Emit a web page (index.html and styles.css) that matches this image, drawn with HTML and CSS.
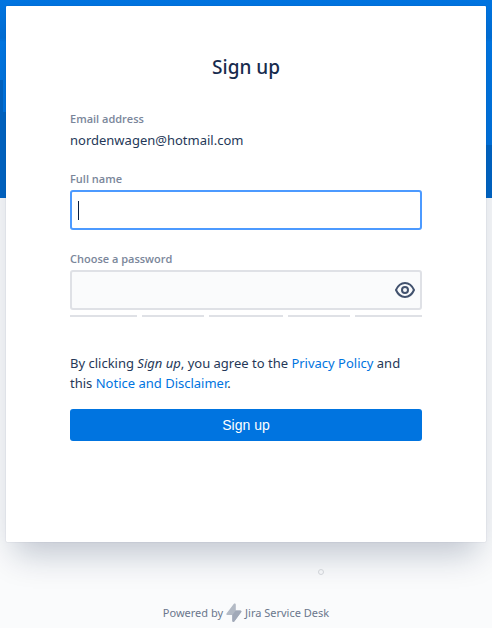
FILE: index.html
```html
<!DOCTYPE html>
<html lang="en">
<head>
<meta charset="utf-8">
<meta name="viewport" content="width=device-width, initial-scale=1">
<title>Sign up</title>
<link rel="stylesheet" href="styles.css">
</head>
<body>
<main class="card">
  <h1 class="title">Sign up</h1>
  <form class="form">
    <div class="field">
      <span class="label">Email address</span>
      <span class="value">nordenwagen@hotmail.com</span>
    </div>
    <div class="field">
      <label class="label" for="name">Full name</label>
      <div class="control control-active">
        <input class="input" id="name" type="text" autofocus>
      </div>
    </div>
    <div class="field">
      <label class="label" for="password">Choose a password</label>
      <div class="control">
        <input class="input" id="password" type="password">
        <button class="reveal" type="button" aria-label="Show password">
          <svg width="22" height="18" viewBox="0 0 22 18" fill="none" stroke="#42526e" stroke-width="2">
            <path d="M2 9C4 4.500 7 2 11 2s7 2.500 9 7c-2 4.500-5 7-9 7s-7-2.500-9-7z" stroke-linejoin="round"/>
            <circle cx="11" cy="9" r="3"/>
          </svg>
        </button>
      </div>
      <div class="strength"><i></i><i></i><i></i><i></i><i></i></div>
    </div>
    <p class="terms">By clicking <em>Sign up</em>, you agree to the <a href="#privacy">Privacy Policy</a> and this <a href="#notice">Notice and Disclaimer</a>.</p>
    <button class="submit" type="submit">Sign up</button>
  </form>
</main>
<footer class="footer">
  <span>Powered by</span>
  <svg width="16" height="20" viewBox="0 0 16 20">
    <path d="M7.700 1C8.500.2 9.800.6 9.800 1.800V7.500h4.400c1.200 0 1.600 1 .9 1.800L8.300 18.500c-.7.9-2 .5-2-.7V12H1.500C.4 12 0 11 .7 10.200z" fill="#b3bac5"/>
    <path d="M6.300 12l3.500-4.500h4.400c1.200 0 1.600 1 .9 1.800L8.300 18.500c-.7.9-2 .5-2-.7z" fill="#a1a9b8"/>
  </svg>
  <span>Jira Service Desk</span>
</footer>
<span class="dot"></span>
</body>
</html>
```
FILE: styles.css
```css
* { box-sizing: border-box; }

body {
  margin: 0;
  padding: 6px 6px 5px;
  min-height: 100vh;
  display: flex;
  flex-direction: column;
  background:
    linear-gradient(#0065c4, #0065c4) left 80px / 3px 118px no-repeat,
    linear-gradient(#0065c4, #0065c4) left 112px / 6px 86px no-repeat,
    linear-gradient(#0065c4, #0065c4) right 145px / 6px 53px no-repeat,
    linear-gradient(#0074e0 0, #006fd6 38px, #0078e5 42px, #0070da 198px) top / 100% 198px no-repeat,
    #fafbfc;
  color: #253858;
  font: 13px/20px "Noto Sans", "Open Sans", sans-serif;
}

.card {
  padding: 47px 64px 101px;
  background: #fff;
  border-radius: 1px;
  box-shadow: 0 0 1px rgba(9, 30, 66, .31), 0 20px 32px -8px rgba(9, 30, 66, .24);
}

.title {
  margin: 0 0 29px;
  color: #172b4d;
  font-size: 19px;
  line-height: 28px;
  font-weight: 500;
  text-align: center;
}

.form { display: flex; flex-direction: column; }
.field { display: flex; flex-direction: column; margin-bottom: 20px; }

.label {
  color: #7a869a;
  font-family: "Open Sans", sans-serif;
  font-size: 11px;
  line-height: 18px;
  font-weight: 600;
  margin-bottom: 2px;
}

.control {
  display: flex;
  align-items: center;
  height: 40px;
  border: 2px solid #dfe1e6;
  border-radius: 3px;
  background: #fafbfc;
}

.control-active { border-color: #4c9aff; background: #fff; }

/* steady insertion caret */
.control-active::before {
  content: "";
  width: 1px;
  height: 19px;
  margin-left: 6px;
  background: #091e42;
}

.input {
  flex: 1;
  min-width: 0;
  padding: 0 6px;
  border: 0;
  outline: 0;
  background: none;
  color: #091e42;
  font: inherit;
}

.control-active .input { padding-left: 0; caret-color: transparent; }

.reveal {
  display: flex;
  align-items: center;
  padding: 0 4px;
  border: 0;
  background: none;
}

.strength {
  display: grid;
  grid-template-columns: 67fr 62fr 74fr 62fr 67fr;
  gap: 5px;
  margin-top: 5px;
}

.strength i { height: 2px; background: #dfe1e6; }

.terms { margin: 16px 0; }
a { color: #0074e0; text-decoration: none; }

.submit {
  height: 32px;
  border: 0;
  border-radius: 3px;
  background: #0074e0;
  color: #fff;
  font: 14px "Liberation Sans", sans-serif;
}

.footer {
  display: flex;
  justify-content: center;
  align-items: center;
  gap: 3px;
  margin-top: auto;
  color: #6b778c;
  font-size: 11px;
  line-height: 16px;
}

.dot {
  position: absolute;
  left: 318px;
  top: 569px;
  width: 6px;
  height: 6px;
  border: 1px solid #d0d3d8;
  border-radius: 50%;
}
```
